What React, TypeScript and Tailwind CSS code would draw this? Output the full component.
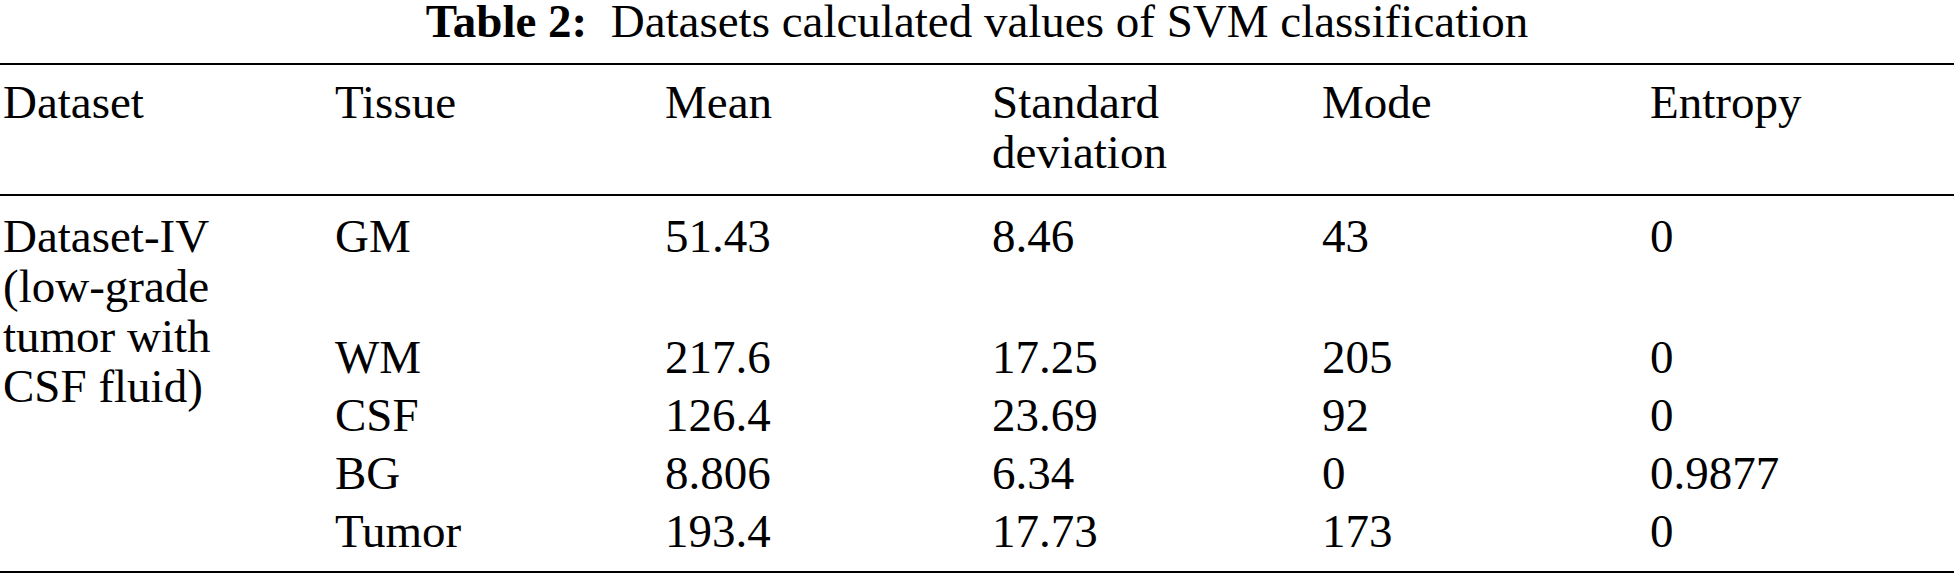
import React from "react";

const rows = [
  { t: "GM", m: "51.43", s: "8.46", mo: "43", e: "0", h: "h-[121px]" },
  { t: "WM", m: "217.6", s: "17.25", mo: "205", e: "0", h: "h-[58px]" },
  { t: "CSF", m: "126.4", s: "23.69", mo: "92", e: "0", h: "h-[58px]" },
  { t: "BG", m: "8.806", s: "6.34", mo: "0", e: "0.9877", h: "h-[58px]" },
  { t: "Tumor", m: "193.4", s: "17.73", mo: "173", e: "0", h: "h-[50px]" },
];

export default function App() {
  return (
    <div className="w-[1954px] h-[579px] bg-white text-black [font-family:'Liberation_Serif','Times_New_Roman',serif] text-[47px] overflow-hidden">
      <div className="h-[63px] text-center leading-[42px] whitespace-pre">
        <span className="font-bold">Table 2:</span>
        {"  "}Datasets calculated values of SVM classification
      </div>
      <div className="border-t-2 border-black grid grid-cols-[332px_330px_327px_330px_328px_1fr] pt-[12px] pb-[17px] leading-[50px]">
        <div className="pl-[3px]">Dataset</div>
        <div className="pl-[3px]">Tissue</div>
        <div className="pl-[3px]">Mean</div>
        <div className="pl-[3px]">
          Standard
          <br />
          deviation
        </div>
        <div className="pl-[3px]">Mode</div>
        <div className="pl-[3px]">Entropy</div>
      </div>
      <div className="border-t-2 border-b-2 border-black flex pt-[15px] pb-[15px] leading-[50px]">
        <div className="w-[332px] pl-[3px]">
          Dataset-IV
          <br />
          (low-grade
          <br />
          tumor with
          <br />
          CSF fluid)
        </div>
        <div className="flex-1 flex flex-col">
          {rows.map((r) => (
            <div key={r.t} className={`grid grid-cols-[330px_327px_330px_328px_1fr] ${r.h}`}>
              <div className="pl-[3px]">{r.t}</div>
              <div className="pl-[3px]">{r.m}</div>
              <div className="pl-[3px]">{r.s}</div>
              <div className="pl-[3px]">{r.mo}</div>
              <div className="pl-[3px]">{r.e}</div>
            </div>
          ))}
        </div>
      </div>
    </div>
  );
}
